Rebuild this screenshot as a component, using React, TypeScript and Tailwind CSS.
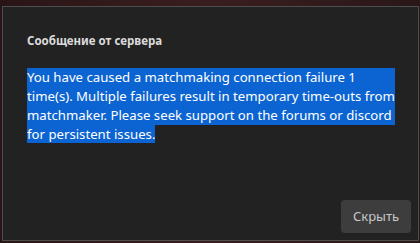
const lines = [
  "You have caused a matchmaking connection failure 1",
  "time(s). Multiple failures result in temporary time-outs from",
  "matchmaker. Please seek support on the forums or discord",
];

export default function App() {
  return (
    <div className="w-[420px] h-[243px] overflow-hidden bg-[linear-gradient(90deg,#2a1516,#3a1e1f_50%,#2a1718)] pl-[2px] pt-[6px] font-['Segoe_UI','Noto_Sans',sans-serif]">
      <div className="w-[417px] h-[235px] bg-[#222222] border border-[#4e4e4e] flex flex-col pl-[24px] pr-[7px] pt-[26px] pb-[7px]">
        <h1 className="text-[11.5px] leading-[16px] font-bold text-[#dcdcdc]">Сообщение от сервера</h1>
        <div className="mt-[19px] text-[13.2px] leading-[19px] text-white">
          {lines.map((l) => (
            <div key={l} className="w-[368px] bg-[#0c64d2] whitespace-nowrap">{l}</div>
          ))}
          <span className="bg-[#0c64d2] whitespace-nowrap">for persistent issues.</span>
        </div>
        <div className="mt-auto flex justify-end">
          <button className="w-[70px] h-[33px] rounded-[4px] bg-[#3d3d3d] text-[13px] text-[#c8c8c8]">Скрыть</button>
        </div>
      </div>
    </div>
  );
}
